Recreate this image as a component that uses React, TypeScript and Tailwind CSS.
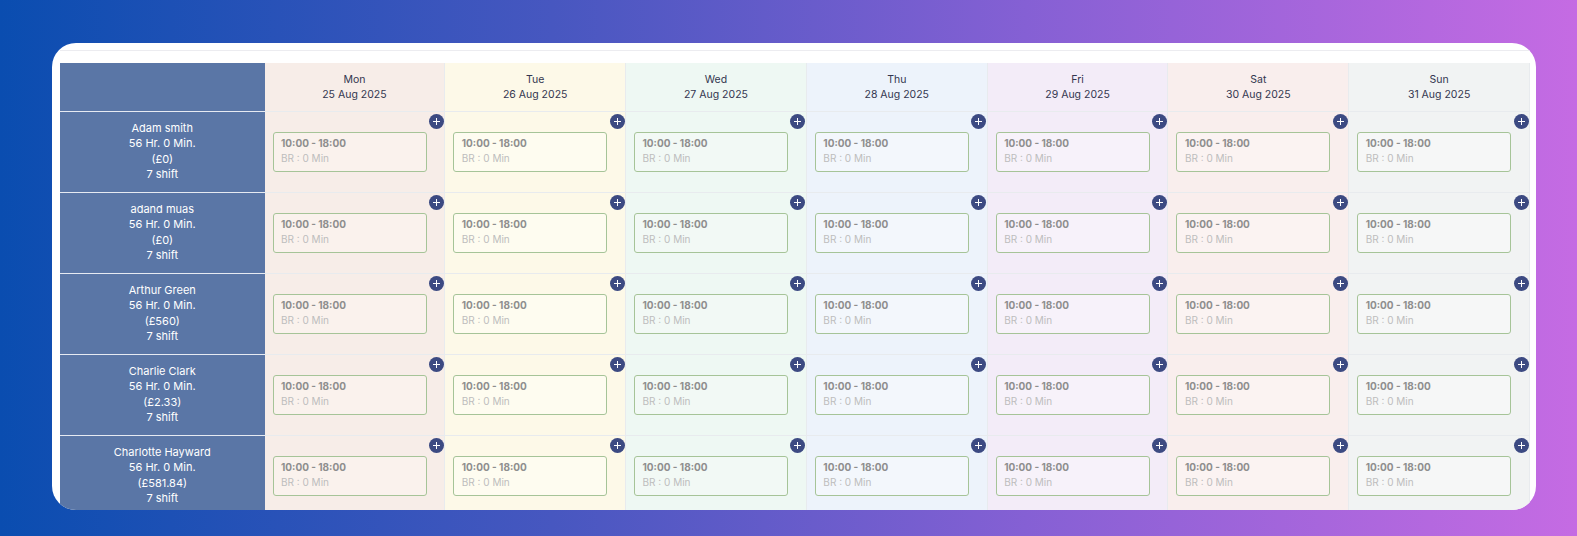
const days = [
  { day: "Mon", date: "25 Aug 2025", bg: "bg-[#f7ede8]", box: "bg-[#faf2ed]" },
  { day: "Tue", date: "26 Aug 2025", bg: "bg-[#fdf9e8]", box: "bg-[#fefcf0]" },
  { day: "Wed", date: "27 Aug 2025", bg: "bg-[#eef8f3]", box: "bg-[#f2f9f5]" },
  { day: "Thu", date: "28 Aug 2025", bg: "bg-[#edf3fb]", box: "bg-[#f3f7fc]" },
  { day: "Fri", date: "29 Aug 2025", bg: "bg-[#f3ecf8]", box: "bg-[#f7f2fa]" },
  { day: "Sat", date: "30 Aug 2025", bg: "bg-[#f9eeed]", box: "bg-[#fbf3f2]" },
  { day: "Sun", date: "31 Aug 2025", bg: "bg-[#f1f3f3]", box: "bg-[#f6f7f7]" },
];

const staff = [
  { name: "Adam smith", pay: "(£0)" },
  { name: "adand muas", pay: "(£0)" },
  { name: "Arthur Green", pay: "(£560)" },
  { name: "Charlie Clark", pay: "(£2.33)" },
  { name: "Charlotte Hayward", pay: "(£581.84)" },
];

function ShiftCell({ bg, box }: { bg: string; box: string }) {
  return (
    <div className={`relative h-[81px] border-t border-r border-[#e8ebee] pt-[20px] pl-[8px] ${bg}`}>
      <button className="absolute top-[2px] right-[0.5px] flex h-[15px] w-[15px] items-center justify-center rounded-full bg-[#3c4a82]">
        <svg width="9" height="9" viewBox="0 0 9 9" fill="none" stroke="#fff" strokeWidth="1">
          <path d="M4.5 1v7M1 4.5h7" />
        </svg>
      </button>
      <div className={`h-[40px] w-[154px] rounded-[3px] border-[1.5px] border-[#a6c498] pl-[7.5px] pt-[3px] ${box}`}>
        <p className="text-[10px] leading-[15.5px] font-bold text-[#8e8e8e]">10:00 - 18:00</p>
        <p className="text-[10px] leading-[15.5px] text-[#bdbdbd]">BR : 0 Min</p>
      </div>
    </div>
  );
}

export default function App() {
  return (
    <div className="h-[536px] overflow-hidden bg-[linear-gradient(90deg,#0a4db0_0%,#4757c0_35%,#8560d4_65%,#c56be3_100%)] pt-[43px] pl-[52px] font-['Inter',sans-serif]">
      <div className="h-[467px] w-[1484px] overflow-hidden rounded-[24px] bg-white pr-[6px] pl-[8px]">
        <div className="h-[8px] border-b border-[#ececf0]" />
        <div className="mt-[12px] grid grid-cols-[204.5px_repeat(7,1fr)]">
          <div className="h-[47.5px] bg-[#5a76a6]" />
          {days.map((d) => (
            <div
              key={d.day}
              className={`flex h-[47.5px] flex-col items-center justify-center border-r border-[#e8ebee] pt-[1px] text-[10.5px] leading-[15px] text-[#33364f] ${d.bg}`}
            >
              <span>{d.day}</span>
              <span>{d.date}</span>
            </div>
          ))}
          {staff.map((s) => (
            <div key={s.name} className="contents">
              <div className="flex h-[81px] flex-col items-center border-t border-[#e6eaf2] bg-[#5a76a6] pt-[9.5px] text-[11px] leading-[15.3px] text-white">
                <span>{s.name}</span>
                <span>56 Hr. 0 Min.</span>
                <span>{s.pay}</span>
                <span>7 shift</span>
              </div>
              {days.map((d) => (
                <ShiftCell key={d.day} bg={d.bg} box={d.box} />
              ))}
            </div>
          ))}
        </div>
      </div>
    </div>
  );
}
